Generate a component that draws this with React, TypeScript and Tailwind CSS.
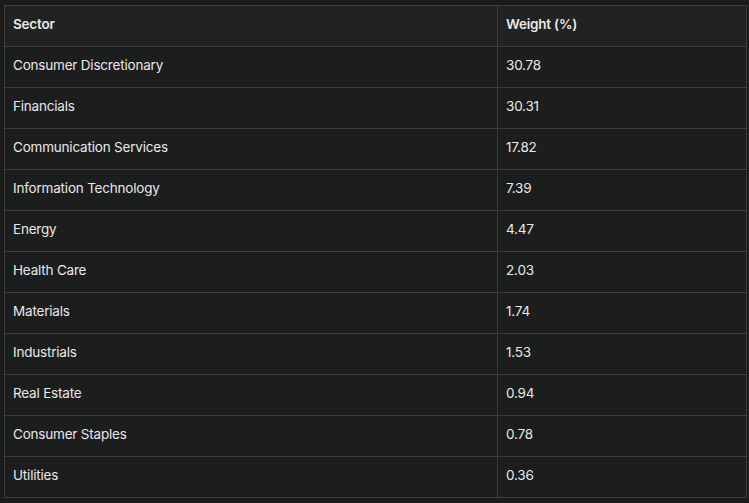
const rows: [string, string][] = [
  ["Consumer Discretionary", "30.78"],
  ["Financials", "30.31"],
  ["Communication Services", "17.82"],
  ["Information Technology", "7.39"],
  ["Energy", "4.47"],
  ["Health Care", "2.03"],
  ["Materials", "1.74"],
  ["Industrials", "1.53"],
  ["Real Estate", "0.94"],
  ["Consumer Staples", "0.78"],
  ["Utilities", "0.36"],
];

const App = () => {
  return (
    <div className="h-[503px] w-[749px] bg-[#1a1b1b] pl-[4px] pt-[5px] [font-family:Inter,sans-serif] text-[13.5px] tracking-[-0.2px] text-[#e8e8e8]">
      <table className="w-[743px] border-collapse">
        <thead>
          <tr className="h-[41px] bg-[#212222]">
            <th className="w-[493px] border border-[#3c3d3d] px-[8px] pb-[3px] text-left font-semibold">Sector</th>
            <th className="border border-[#3c3d3d] px-[8px] pb-[3px] text-left font-semibold">Weight (%)</th>
          </tr>
        </thead>
        <tbody>
          {rows.map(([s, w]) => (
            <tr key={s} className="h-[41px] bg-[#1c1d1d]">
              <td className="border border-[#3c3d3d] px-[8px] pb-[3px]">{s}</td>
              <td className="border border-[#3c3d3d] px-[8px] pb-[3px]">{w}</td>
            </tr>
          ))}
        </tbody>
      </table>
    </div>
  );
};

export default App;
